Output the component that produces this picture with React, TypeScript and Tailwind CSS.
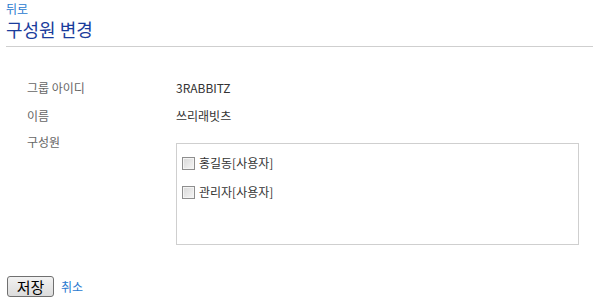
import { useState } from "react";

const MEMBERS = [
  { id: "hong", name: "홍길동[사용자]" },
  { id: "admin", name: "관리자[사용자]" },
];

/** 구성원 변경 form */
export default function App() {
  const [checked, setChecked] = useState<Record<string, boolean>>({});

  return (
    <div
      className="h-[305px] w-[593px] overflow-hidden bg-white text-[12px] text-[#333]"
      style={{ fontFamily: '"Noto Sans CJK KR", "Noto Sans", sans-serif' }}
    >
      {/* Header */}
      <div className="pl-[6px]">
        <a href="#" className="block h-[18px] pt-[1px] text-[12px] leading-[16px] text-[#2a7ad0]">
          뒤로
        </a>
        <h1 className="h-[22px] text-[18px] font-normal leading-[22px] text-[#1a3c9c]">구성원 변경</h1>
        <div className="mt-[6px] h-px bg-[#cfcfcf]" />
      </div>

      {/* Fields */}
      <div className="flex flex-col pl-[27px] pt-[27px]">
        <div className="flex h-[28px] items-center">
          <span className="w-[149px] text-[#666]">그룹 아이디</span>
          <span>3RABBITZ</span>
        </div>
        <div className="flex h-[28px] items-center">
          <span className="w-[149px] text-[#666]">이름</span>
          <span>쓰리래빗츠</span>
        </div>
        <div className="flex">
          <span className="mt-[4px] w-[149px] text-[#666] leading-[16px]">구성원</span>
          <div className="mt-[13px] flex h-[102px] w-[403px] flex-col gap-[11px] border border-[#cfcfcf] pl-[5px] pt-[10px]">
            {MEMBERS.map((m) => (
              <label key={m.id} className="flex h-[18px] items-center gap-[4px]">
                <input
                  type="checkbox"
                  checked={!!checked[m.id]}
                  onChange={(e) => setChecked((p) => ({ ...p, [m.id]: e.target.checked }))}
                  className="m-0 h-[13px] w-[13px] appearance-none border border-[#8e8e8e] bg-gradient-to-br from-[#d8d8d8] to-[#f6f6f6] shadow-[inset_0_0_0_1px_#f4f4f4] checked:bg-[#4a8ad8]"
                />
                <span>{m.name}</span>
              </label>
            ))}
          </div>
        </div>
      </div>

      {/* Actions */}
      <div className="mt-[31px] flex items-center gap-[7px] pl-[7px]">
        <button className="h-[21px] w-[47px] rounded-[3px] border border-[#707070] bg-gradient-to-b from-[#f2f2f2] to-[#dcdcdc] text-[15px] leading-[18px] text-black">
          저장
        </button>
        <a href="#" className="text-[12px] text-[#2a7ad0]">
          취소
        </a>
      </div>
    </div>
  );
}
